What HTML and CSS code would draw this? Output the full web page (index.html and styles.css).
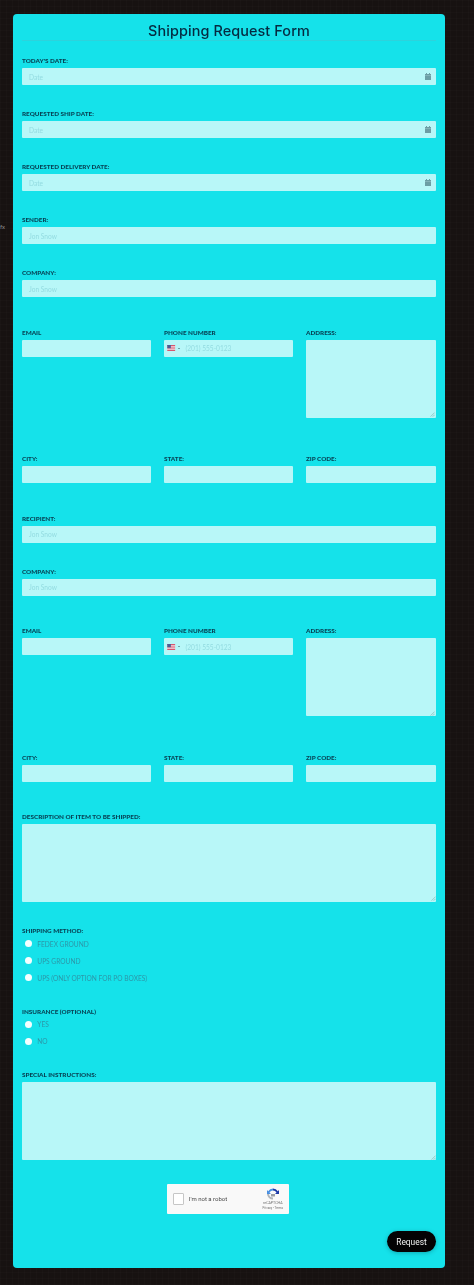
FILE: index.html
```html
<!DOCTYPE html>
<html lang="en">
<head>
<meta charset="utf-8">
<title>Shipping Request Form</title>
<link rel="stylesheet" href="styles.css">
</head>
<body>
<span class="edge-mark">fx</span>
<svg class="sprites" width="0" height="0" aria-hidden="true">
  <symbol id="cal" viewBox="0 0 6 7"><path d="M0 1h6v6H0z" fill="#6b9ea5"/><path d="M1 0h1v1H1zM4 0h1v1H4z" fill="#6b9ea5"/><path d="M0 2.2h6v.5H0z" fill="#9cc9cd"/></symbol>
  <symbol id="flag" viewBox="0 0 8 6"><path d="M0 0h8v6H0z" fill="#f3dfe3"/><path d="M0 0h8v.9H0zM0 1.7h8v.9H0zM0 3.4h8v.9H0zM0 5.1h8V6H0z" fill="#d8566f"/><path d="M0 0h3.6v3.2H0z" fill="#4c5c94"/></symbol>
  <symbol id="grip" viewBox="0 0 5 5"><path d="M4.6.6.6 4.6M4.6 2.8 2.8 4.6" stroke="#7fa9ad" stroke-width=".6" fill="none"/></symbol>
</svg>
<main class="card">
  <h1 class="title">Shipping Request Form</h1>
  <form class="form">
    <div class="field"><label class="label">TODAY'S DATE:</label><div class="control"><input class="input" placeholder="Date"><svg class="cal"><use href="#cal"/></svg></div></div>
    <div class="field"><label class="label">REQUESTED SHIP DATE:</label><div class="control"><input class="input" placeholder="Date"><svg class="cal"><use href="#cal"/></svg></div></div>
    <div class="field"><label class="label">REQUESTED DELIVERY DATE:</label><div class="control"><input class="input" placeholder="Date"><svg class="cal"><use href="#cal"/></svg></div></div>
    <div class="field"><label class="label">SENDER:</label><input class="input" placeholder="Jon Snow"></div>
    <div class="field before-row"><label class="label">COMPANY:</label><input class="input" placeholder="Jon Snow"></div>

    <div class="row">
      <div class="col"><label class="label">EMAIL</label><input class="input"></div>
      <div class="col"><label class="label">PHONE NUMBER</label><div class="control"><svg class="flag"><use href="#flag"/></svg><span class="caret"></span><input class="input phone" placeholder="(201) 555-0123"></div></div>
      <div class="col"><label class="label">ADDRESS:</label><div class="control"><textarea class="area"></textarea><svg class="grip"><use href="#grip"/></svg></div></div>
    </div>
    <div class="row city-row">
      <div class="col"><label class="label">CITY:</label><input class="input"></div>
      <div class="col"><label class="label">STATE:</label><input class="input"></div>
      <div class="col"><label class="label">ZIP CODE:</label><input class="input"></div>
    </div>

    <div class="field"><label class="label">RECIPIENT:</label><input class="input" placeholder="Jon Snow"></div>
    <div class="field before-row"><label class="label">COMPANY:</label><input class="input" placeholder="Jon Snow"></div>

    <div class="row">
      <div class="col"><label class="label">EMAIL</label><input class="input"></div>
      <div class="col"><label class="label">PHONE NUMBER</label><div class="control"><svg class="flag"><use href="#flag"/></svg><span class="caret"></span><input class="input phone" placeholder="(201) 555-0123"></div></div>
      <div class="col"><label class="label">ADDRESS:</label><div class="control"><textarea class="area"></textarea><svg class="grip"><use href="#grip"/></svg></div></div>
    </div>
    <div class="row city-row">
      <div class="col"><label class="label">CITY:</label><input class="input"></div>
      <div class="col"><label class="label">STATE:</label><input class="input"></div>
      <div class="col"><label class="label">ZIP CODE:</label><input class="input"></div>
    </div>

    <div class="field"><label class="label">DESCRIPTION OF ITEM TO BE SHIPPED:</label><div class="control"><textarea class="area"></textarea><svg class="grip"><use href="#grip"/></svg></div></div>

    <fieldset class="group">
      <div class="label group-label">SHIPPING METHOD:</div>
      <div class="option"><span class="radio"></span>FEDEX GROUND</div>
      <div class="option"><span class="radio"></span>UPS GROUND</div>
      <div class="option"><span class="radio"></span>UPS (ONLY OPTION FOR PO BOXES)</div>
    </fieldset>
    <fieldset class="group">
      <div class="label group-label">INSURANCE (OPTIONAL)</div>
      <div class="option"><span class="radio"></span>YES</div>
      <div class="option"><span class="radio"></span>NO</div>
    </fieldset>

    <div class="field last-field"><label class="label">SPECIAL INSTRUCTIONS:</label><div class="control"><textarea class="area"></textarea><svg class="grip"><use href="#grip"/></svg></div></div>

    <div class="captcha">
      <span class="check"></span>
      <span class="robot">I'm not a robot</span>
      <div class="brand">
        <svg class="rc-logo" viewBox="0 0 24 24">
          <path d="M12 1a11 11 0 0 1 9.6 5.6L24 4v8h-8l3-3a8 8 0 0 0-7-4z" fill="#1c3aa9"/>
          <path d="M12 1A11 11 0 0 0 2.4 6.6L0 4v8h8L5 9a8 8 0 0 1 7-4z" fill="#4a90e2"/>
          <path d="M0 12a12 12 0 0 0 12 11v-4a8 8 0 0 1-8-7z" fill="#b0b4b8"/>
          <path d="M8 12h8v5H8z" fill="#9a9fa5"/>
        </svg>
        <span class="rc-name">reCAPTCHA</span>
        <span class="rc-links">Privacy - Terms</span>
      </div>
    </div>
    <div class="actions"><button class="submit" type="button">Request</button></div>
  </form>
</main>
</body>
</html>
```

FILE: styles.css
```css
* { box-sizing: border-box; }
html, body { margin: 0; }
body {
  position: relative;
  width: 474px;
  height: 1285px;
  padding: 14.3px 29.3px 17px 13.3px;
  overflow: hidden;
  background-color: #171211;
  background-image:
    linear-gradient(rgba(255,255,255,.012) 1px, transparent 1px),
    linear-gradient(90deg, rgba(255,255,255,.012) 1px, transparent 1px);
  background-size: 6px 6px;
  font-family: "Lato", "Liberation Sans", sans-serif;
}
.sprites { position: absolute; }
.edge-mark {
  position: absolute;
  left: 0;
  top: 223px;
  font-size: 6px;
  line-height: 8px;
  color: #8b8b8b;
}
.card {
  width: 431.4px;
  height: 1253.4px;
  padding: 0 8.7px;
  border-radius: 4px;
  background: #15e2ea;
  filter: blur(.3px);
}
.title {
  height: 27px;
  margin: 0 0 15px;
  border-bottom: 1px solid #2dd3dc;
  font-family: "Inter", "Liberation Sans", sans-serif;
  font-size: 14.4px;
  font-weight: 500;
  line-height: 34px;
  text-align: center;
  letter-spacing: .1px;
  color: #052a40;
}
.form { display: block; }
.field { margin-bottom: 24px; }
.before-row { margin-bottom: 30.5px; }
.row {
  display: grid;
  grid-template-columns: 129px 129px 130px;
  column-gap: 13px;
  margin-bottom: 36.5px;
}
.city-row { margin-bottom: 30.3px; }
.label {
  display: block;
  height: 8px;
  margin-bottom: 4px;
  font-size: 6.35px;
  font-weight: 900;
  line-height: 9.4px;
  white-space: nowrap;
  color: #073f52;
}
.control { position: relative; }
.input, .area {
  display: block;
  width: 100%;
  margin: 0;
  border: 0;
  border-radius: 1px;
  background: #b8f7f8;
  font-family: inherit;
  color: #07324a;
  outline: none;
}
.input {
  height: 17px;
  padding: 0 7px;
  font-size: 6.6px;
}
.input::placeholder { color: #93dbe0; opacity: 1; }
.phone { padding-left: 21.5px; }
.area {
  height: 78px;
  padding: 4px 7px;
  resize: none;
}
.cal {
  position: absolute;
  right: 5.5px;
  top: 5px;
  width: 6px;
  height: 7px;
}
.flag {
  position: absolute;
  left: 3.5px;
  top: 5.5px;
  width: 8.5px;
  height: 6px;
}
.caret {
  position: absolute;
  left: 14px;
  top: 7.8px;
  border: 1.4px solid transparent;
  border-top: 1.8px solid #304b5d;
  border-bottom: 0;
}
.grip {
  position: absolute;
  right: .5px;
  bottom: .5px;
  width: 5px;
  height: 5px;
}
.group {
  margin: 0 0 20.6px;
  padding: 0;
  border: 0;
}
.group-label { margin-bottom: 1.2px; }
.option {
  display: flex;
  align-items: center;
  gap: 5.5px;
  height: 17px;
  padding-left: 2.8px;
  font-size: 6.6px;
  color: #2c97a8;
}
.radio {
  flex: none;
  width: 7px;
  height: 7px;
  border-radius: 50%;
  background: #f4ffff;
}
.last-field { margin-bottom: 23.2px; }
.captcha {
  display: flex;
  align-items: center;
  width: 122px;
  height: 30.6px;
  margin: 0 0 17px 145.3px;
  padding: 0 4px 0 5.5px;
  border-radius: 1px;
  background: #f9f9f9;
  font-family: "Roboto", "Liberation Sans", sans-serif;
}
.check {
  flex: none;
  width: 11.5px;
  height: 11.5px;
  border: 1px solid #c6c6c6;
  border-radius: 1px;
  background: #fff;
}
.robot {
  margin-left: 4.5px;
  font-size: 6px;
  color: #4a4a4a;
}
.brand {
  display: flex;
  flex-direction: column;
  align-items: center;
  margin-left: auto;
  width: 25px;
}
.rc-logo { width: 12px; height: 12px; margin-bottom: 1.5px; }
.rc-name { font-size: 3.6px; line-height: 4.5px; color: #6f6f6f; }
.rc-links { font-size: 3px; line-height: 4px; color: #6f6f6f; white-space: nowrap; }
.actions { display: flex; justify-content: flex-end; }
.submit {
  width: 49px;
  height: 20.7px;
  padding: 0;
  border: 0;
  border-radius: 10.4px;
  background: #040304;
  box-shadow: 0 1px 4px rgba(0, 70, 80, .35);
  font-family: "Roboto", "Liberation Sans", sans-serif;
  font-size: 8.4px;
  color: #f3f3f3;
}
```
